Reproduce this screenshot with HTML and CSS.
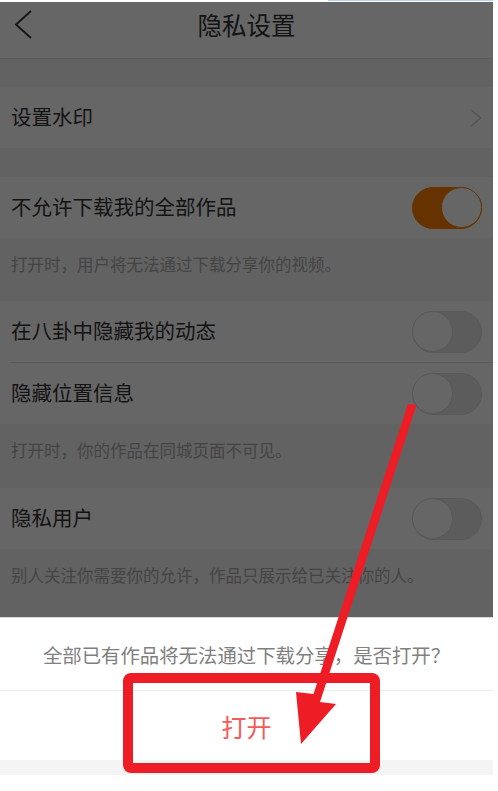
FILE: index.html
```html
<!DOCTYPE html>
<html lang="zh-CN">
<head>
<meta charset="utf-8">
<title>隐私设置</title>
<link rel="stylesheet" href="styles.css">
</head>
<body>
<div class="capture-edge"><span class="capture-line"></span></div>
<div class="phone">
  <header class="nav">
    <svg class="back" width="20" height="30" viewBox="0 0 20 30"><path d="M17 1 L2 14.5 L17 28" fill="none" stroke="#333" stroke-width="1.8"/></svg>
    <h1 class="title">隐私设置</h1>
    <span></span>
  </header>
  <div class="gap gap-top"></div>
  <div class="cell">
    <span class="label">设置水印</span>
    <svg class="chev" width="12" height="18" viewBox="0 0 12 18"><path d="M1.5 1 L10.5 9 L1.5 17" fill="none" stroke="#c9c9c9" stroke-width="1.2"/></svg>
  </div>
  <div class="gap"></div>
  <div class="cell">
    <span class="label">不允许下载我的全部作品</span>
    <span class="switch on"><span class="knob"></span></span>
  </div>
  <p class="desc">打开时，用户将无法通过下载分享你的视频。</p>
  <div class="group">
    <div class="cell">
      <span class="label">在八卦中隐藏我的动态</span>
      <span class="switch"><span class="knob"></span></span>
    </div>
    <div class="divider"></div>
    <div class="cell">
      <span class="label">隐藏位置信息</span>
      <span class="switch"><span class="knob"></span></span>
    </div>
  </div>
  <p class="desc desc-2">打开时，你的作品在同城页面不可见。</p>
  <div class="cell">
    <span class="label">隐私用户</span>
    <span class="switch"><span class="knob"></span></span>
  </div>
  <p class="desc">别人关注你需要你的允许，作品只展示给已关注你的人。</p>

  <div class="mask"></div>
  <div class="sheet">
    <p class="sheet-msg">全部已有作品将无法通过下载分享，是否打开？</p>
    <div class="sheet-btn">打开</div>
    <div class="sheet-gap"></div>
  </div>
</div>
<svg class="annot" width="498" height="791" viewBox="0 0 498 791">
  <rect x="128" y="678" width="247" height="90" rx="3" ry="3" fill="none" stroke="#ee1c25" stroke-width="10"/>
  <polygon points="408,404 416.5,405 320,702 336,704 301,744 296,692 313.5,694" fill="#ee1c25"/>
</svg>
</body>
</html>
```
FILE: styles.css
```css
html, body {
  margin: 0;
  padding: 0;
  background: #fff;
}
body {
  position: relative;
  width: 498px;
  height: 791px;
  overflow: hidden;
  font-family: "Noto Sans CJK SC", "Noto Sans", sans-serif;
  color: #333;
}
.capture-edge {
  height: 2px;
  display: flex;
}
.capture-line {
  margin-left: 328px;
  width: 165px;
  height: 1px;
  background: #b7d2f0;
}
.phone {
  position: relative;
  width: 493px;
  height: 773px;
  overflow: hidden;
  background: #f5f5f5;
}
.nav {
  height: 56px;
  background: #fff;
  border-bottom: 1px solid #e1e1e1;
  display: grid;
  grid-template-columns: 1fr auto 1fr;
  align-items: start;
}
.back {
  display: block;
  margin: 8px 0 0 14px;
}
.title {
  margin: 0;
  font-size: 24.5px;
  font-weight: normal;
  line-height: 45px;
  color: #333;
}
.gap {
  height: 29px;
}
.gap-top {
  height: 28px;
}
.group {
  background: #fff;
}
.divider {
  height: 1px;
  margin-left: 10px;
  background: #e1e1e1;
}
.cell {
  height: 61px;
  background: #fff;
  display: flex;
  align-items: center;
  justify-content: space-between;
  padding: 0 11px;
}
.label {
  font-size: 20.5px;
  line-height: 28px;
  margin-bottom: 3px;
  color: #333;
}
.chev {
  display: block;
}
.switch {
  position: relative;
  box-sizing: border-box;
  width: 70px;
  height: 42px;
  border-radius: 21px;
  background: #e6e6e6;
  border: 1px solid #dedede;
  display: flex;
  align-items: center;
}
.switch .knob {
  box-sizing: border-box;
  width: 41px;
  height: 41px;
  margin-left: -1px;
  border-radius: 50%;
  background: #fff;
  border: 1px solid #dcdcdc;
}
.switch.on {
  background: #ff8000;
  border-color: #ff8000;
  justify-content: flex-end;
}
.switch.on .knob {
  margin-left: 0;
  margin-right: -1px;
  border-color: #ff8000;
}
.desc {
  margin: 0;
  height: 63px;
  box-sizing: border-box;
  padding: 15px 11px 0;
  font-size: 16.5px;
  line-height: 22px;
  color: #aaa;
}
.desc-2 {
  height: 64px;
}
.mask {
  position: absolute;
  inset: 0;
  background: rgba(0, 0, 0, 0.6);
}
.sheet {
  position: absolute;
  left: 0;
  right: 0;
  bottom: 0;
  background: #fff;
  border-top: 1px solid #dcdcdc;
}
.sheet-msg {
  margin: 0;
  height: 72px;
  border-bottom: 1px solid #ececec;
  display: flex;
  align-items: center;
  justify-content: center;
  font-size: 19.4px;
  color: #808080;
}
.sheet-btn {
  height: 69px;
  display: flex;
  align-items: center;
  justify-content: center;
  font-size: 25px;
  color: #f45b5b;
}
.sheet-gap {
  height: 15px;
  background: #f4f4f5;
}
.annot {
  position: absolute;
  left: 0;
  top: 0;
  pointer-events: none;
}
```
